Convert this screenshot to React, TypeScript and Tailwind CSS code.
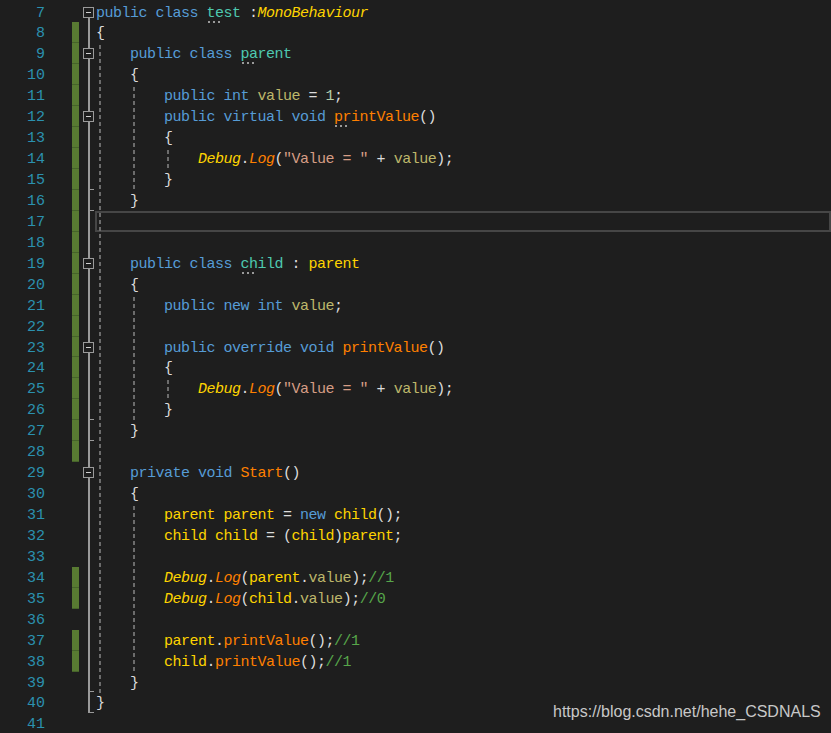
import React from "react";

const LH = 20.94;
const TOP = 1.5;

type Tok = [string, string?, boolean?];

const colors: Record<string, string> = {
  k: "text-[#569cd6]",
  c: "text-[#4ec9b0]",
  y: "text-[#ffd400]",
  yi: "text-[#ffd400] italic",
  o: "text-[#ff8000]",
  oi: "text-[#ff8000] italic",
  f: "text-[#bdb76b]",
  s: "text-[#d69d85]",
  n: "text-[#b5cea8]",
  g: "text-[#57a64a]",
  p: "text-[#dcdcdc]",
};

const debugLine = (arg: Tok[], comment?: string): Tok[] => [
  ["Debug", "yi"],
  [".", "p"],
  ["Log", "oi"],
  ["(", "p"],
  ...arg,
  [");", "p"],
  ...(comment ? ([[comment, "g"]] as Tok[]) : []),
];

// outline: s = start box, b = box, l = line, e = line + end tick, n = none
const lines: { n: number; bar: boolean; out: string; code: Tok[] }[] = [
  { n: 7, bar: false, out: "s", code: [["public class ", "k"], ["test", "c", true], [" :", "p"], ["MonoBehaviour", "yi"]] },
  { n: 8, bar: true, out: "l", code: [["{", "p"]] },
  { n: 9, bar: true, out: "b", code: [["    public class ", "k"], ["parent", "c", true]] },
  { n: 10, bar: true, out: "l", code: [["    {", "p"]] },
  { n: 11, bar: true, out: "l", code: [["        public int ", "k"], ["value", "f"], [" = ", "p"], ["1", "n"], [";", "p"]] },
  { n: 12, bar: true, out: "b", code: [["        public virtual void ", "k"], ["printValue", "o", true], ["()", "p"]] },
  { n: 13, bar: true, out: "l", code: [["        {", "p"]] },
  { n: 14, bar: true, out: "l", code: [["            "], ...debugLine([["\"Value = \"", "s"], [" + ", "p"], ["value", "f"]])] },
  { n: 15, bar: true, out: "e", code: [["        }", "p"]] },
  { n: 16, bar: true, out: "e", code: [["    }", "p"]] },
  { n: 17, bar: true, out: "l", code: [] },
  { n: 18, bar: true, out: "l", code: [] },
  { n: 19, bar: true, out: "b", code: [["    public class ", "k"], ["child", "c", true], [" : ", "p"], ["parent", "y"]] },
  { n: 20, bar: true, out: "l", code: [["    {", "p"]] },
  { n: 21, bar: true, out: "l", code: [["        public new int ", "k"], ["value", "f"], [";", "p"]] },
  { n: 22, bar: true, out: "l", code: [] },
  { n: 23, bar: true, out: "b", code: [["        public override void ", "k"], ["printValue", "o"], ["()", "p"]] },
  { n: 24, bar: true, out: "l", code: [["        {", "p"]] },
  { n: 25, bar: true, out: "l", code: [["            "], ...debugLine([["\"Value = \"", "s"], [" + ", "p"], ["value", "f"]])] },
  { n: 26, bar: true, out: "e", code: [["        }", "p"]] },
  { n: 27, bar: true, out: "e", code: [["    }", "p"]] },
  { n: 28, bar: true, out: "l", code: [] },
  { n: 29, bar: false, out: "b", code: [["    private void ", "k"], ["Start", "o"], ["()", "p"]] },
  { n: 30, bar: false, out: "l", code: [["    {", "p"]] },
  { n: 31, bar: false, out: "l", code: [["        "], ["parent parent", "y"], [" = ", "p"], ["new", "k"], [" "], ["child", "y"], ["();", "p"]] },
  { n: 32, bar: false, out: "l", code: [["        "], ["child child", "y"], [" = (", "p"], ["child", "y"], [")", "p"], ["parent", "y"], [";", "p"]] },
  { n: 33, bar: false, out: "l", code: [] },
  { n: 34, bar: true, out: "l", code: [["        "], ...debugLine([["parent", "y"], [".", "p"], ["value", "f"]], "//1")] },
  { n: 35, bar: true, out: "l", code: [["        "], ...debugLine([["child", "y"], [".", "p"], ["value", "f"]], "//0")] },
  { n: 36, bar: false, out: "l", code: [] },
  { n: 37, bar: true, out: "l", code: [["        "], ["parent", "y"], [".", "p"], ["printValue", "o"], ["();", "p"], ["//1", "g"]] },
  { n: 38, bar: true, out: "l", code: [["        "], ["child", "y"], [".", "p"], ["printValue", "o"], ["();", "p"], ["//1", "g"]] },
  { n: 39, bar: false, out: "e", code: [["    }", "p"]] },
  { n: 40, bar: false, out: "e", code: [["}", "p"]] },
  { n: 41, bar: false, out: "n", code: [] },
];

// indent guides: [left px, first line, last line]
const guides: [number, number, number][] = [
  [99, 9, 39],
  [133, 11, 15],
  [167, 14, 14],
  [133, 21, 26],
  [167, 25, 25],
  [133, 31, 38],
];

function Outline({ kind }: { kind: string }) {
  if (kind === "n") return <div className="w-[17px] shrink-0" />;
  return (
    <div className="relative w-[17px] shrink-0 h-full">
      {(kind === "l" || kind === "e") && (
        <div className="absolute left-[9px] top-0 bottom-0 w-[2px] bg-[#9a9a9a]" />
      )}
      {kind === "e" && <div className="absolute left-[9px] bottom-0 w-[6px] h-px bg-[#9a9a9a]" />}
      {kind === "b" && <div className="absolute left-[9px] top-0 h-[5px] w-[2px] bg-[#9a9a9a]" />}
      {(kind === "b" || kind === "s") && (
        <>
          <div className="absolute left-[4px] top-[5px] w-[11px] h-[11px] border border-[#9a9a9a] bg-[#1e1e1e] flex items-center justify-center">
            <div className="w-[5px] h-px bg-[#d0d0d0]" />
          </div>
          <div className="absolute left-[9px] top-[16px] bottom-0 w-[2px] bg-[#9a9a9a]" />
        </>
      )}
    </div>
  );
}

function Code({ code }: { code: Tok[] }) {
  return (
    <>
      {code.map(([text, c, dots], i) => (
        <span key={i} className={`relative ${c ? colors[c] : ""}`}>
          {text}
          {dots && (
            <span className="absolute left-[1px] top-[16px] flex gap-[3px]">
              <span className="w-[2px] h-[2px] bg-[#9a9a9a]" />
              <span className="w-[2px] h-[2px] bg-[#9a9a9a]" />
              <span className="w-[2px] h-[2px] bg-[#9a9a9a]" />
            </span>
          )}
        </span>
      ))}
    </>
  );
}

export default function App() {
  return (
    <div className="relative w-[831px] h-[733px] overflow-hidden bg-[#1e1e1e] pt-[1.5px] font-['Liberation_Mono',monospace] text-[15px] tracking-[-0.5px]">
      {lines.map((ln) => (
        <div key={ln.n} className="flex h-[20.94px] leading-[20.94px] whitespace-pre">
          <div className="w-[45px] shrink-0 pt-[2px] text-right text-[#2b91af] tracking-normal">{ln.n}</div>
          <div className="w-[27px] shrink-0" />
          <div className="w-[7px] shrink-0">
            {ln.bar && <div className="h-full bg-[#587a32] border-b border-[#46632a]" />}
          </div>
          <Outline kind={ln.out} />
          {ln.n === 17 ? (
            <div className="flex-1 -ml-px border-2 border-[#464646]" />
          ) : (
            <div className="flex-1 pt-[2px]">
              <Code code={ln.code} />
            </div>
          )}
        </div>
      ))}

      {guides.map(([left, a, b], i) => (
        <div
          key={i}
          className="absolute w-[2px] bg-[repeating-linear-gradient(to_bottom,#6c6c6c_0px,#6c6c6c_4px,transparent_4px,transparent_7px)]"
          style={{ left, top: TOP + (a - 7) * LH + 2, height: (b - a + 1) * LH - 2 }}
        />
      ))}

      <div className="absolute left-[553px] top-[703px] leading-[18px] text-[16px] tracking-normal text-[#c8c8c8] font-['Liberation_Sans',Arial,sans-serif]">
        https://blog.csdn.net/hehe_CSDNALS
      </div>
    </div>
  );
}
